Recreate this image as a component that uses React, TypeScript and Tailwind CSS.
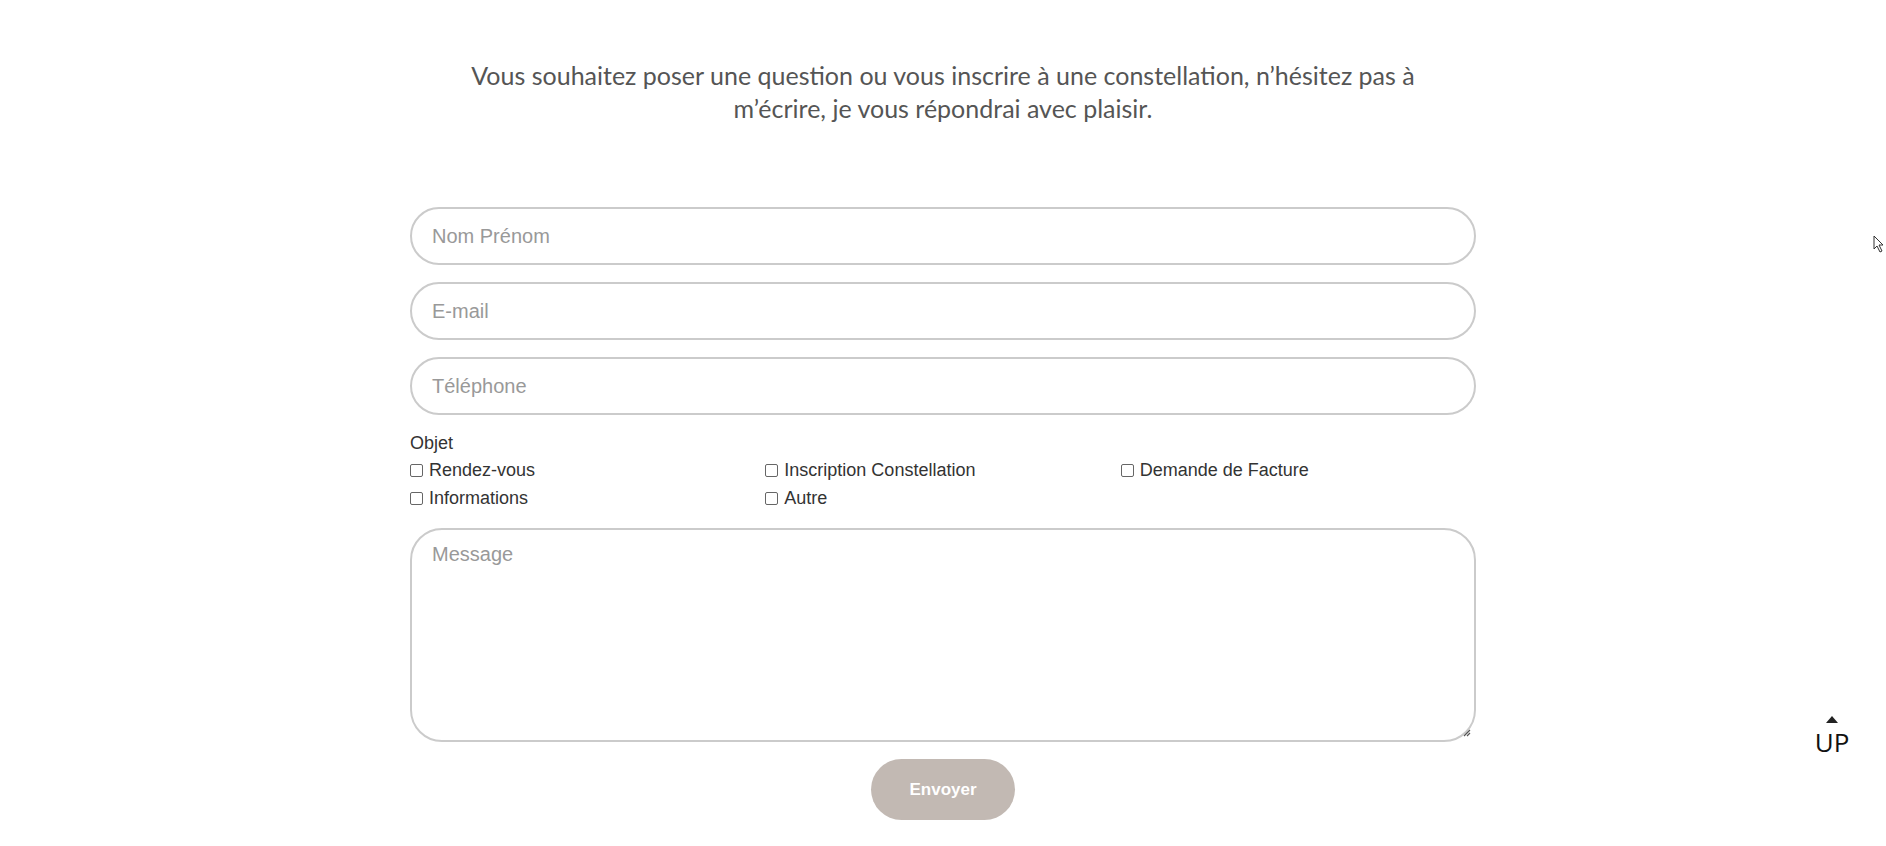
import React from "react";

const font = { fontFamily: '"Liberation Sans", Arial, sans-serif' };

function Check({ label }: { label: string }) {
  return (
    <label className="flex items-center gap-[6px] h-[28px] text-[18px] text-[#333]">
      <span className="inline-block w-[13px] h-[13px] border border-[#666] rounded-[2px] bg-white" />
      <span>{label}</span>
    </label>
  );
}

export default function App() {
  return (
    <div className="relative w-full min-h-[846px] bg-white" style={font}>
      <div className="pt-[59px] flex flex-col items-center">
        <p
          className="w-[1100px] text-center text-[25px] leading-[33px] text-[#555]"
          style={{ fontFamily: 'Lato, "Open Sans", sans-serif' }}
        >
          Vous souhaitez poser une question ou vous inscrire à une constellation, n’hésitez pas à
          <br />
          m’écrire, je vous répondrai avec plaisir.
        </p>
        <form className="w-[1066px] mt-[82px] flex flex-col">
          <div className="flex flex-col gap-[17px]">
            {["Nom Prénom", "E-mail", "Téléphone"].map((p) => (
              <div
                key={p}
                className="h-[58px] border-2 border-[#cbcbcb] rounded-full flex items-center px-[20px] text-[20px] text-[#999]"
              >
                {p}
              </div>
            ))}
          </div>
          <div className="mt-[15px] text-[18px] text-[#333] leading-[26px]">Objet</div>
          <div className="grid grid-cols-3">
            <Check label="Rendez-vous" />
            <Check label="Inscription Constellation" />
            <Check label="Demande de Facture" />
            <Check label="Informations" />
            <Check label="Autre" />
          </div>
          <div className="relative mt-[16px] h-[214px] border-2 border-[#cbcbcb] rounded-[32px] px-[20px] pt-[9px] text-[20px] text-[#999]">
            Message
            <svg className="absolute right-[3px] bottom-[3px]" width="9" height="9" viewBox="0 0 9 9">
              <path d="M8 2 L2 8 M8 5 L5 8" stroke="#555" strokeWidth="1.2" />
            </svg>
          </div>
          <div className="flex justify-center mt-[17px]">
            <button
              type="button"
              className="w-[144px] h-[61px] rounded-full bg-[#c2b9b3] text-white font-bold text-[17px]"
            >
              Envoyer
            </button>
          </div>
        </form>
      </div>
      <div className="absolute left-[1810px] top-[716px] w-[44px] flex flex-col items-center text-[#111]">
        <svg width="12" height="7" viewBox="0 0 12 7">
          <path d="M6 0 L12 7 L0 7 Z" fill="#222" />
        </svg>
        <span className="text-[26px] leading-[28px] mt-[5px]" style={{ fontFamily: '"Open Sans", sans-serif' }}>
          UP
        </span>
      </div>
      <svg className="absolute left-[1873px] top-[235px]" width="12" height="18" viewBox="0 0 12 18">
        <path d="M1 1 L1 14 L4 11 L7 17 L9 16 L6 10 L10 10 Z" fill="white" stroke="#333" strokeWidth="1" />
      </svg>
    </div>
  );
}
